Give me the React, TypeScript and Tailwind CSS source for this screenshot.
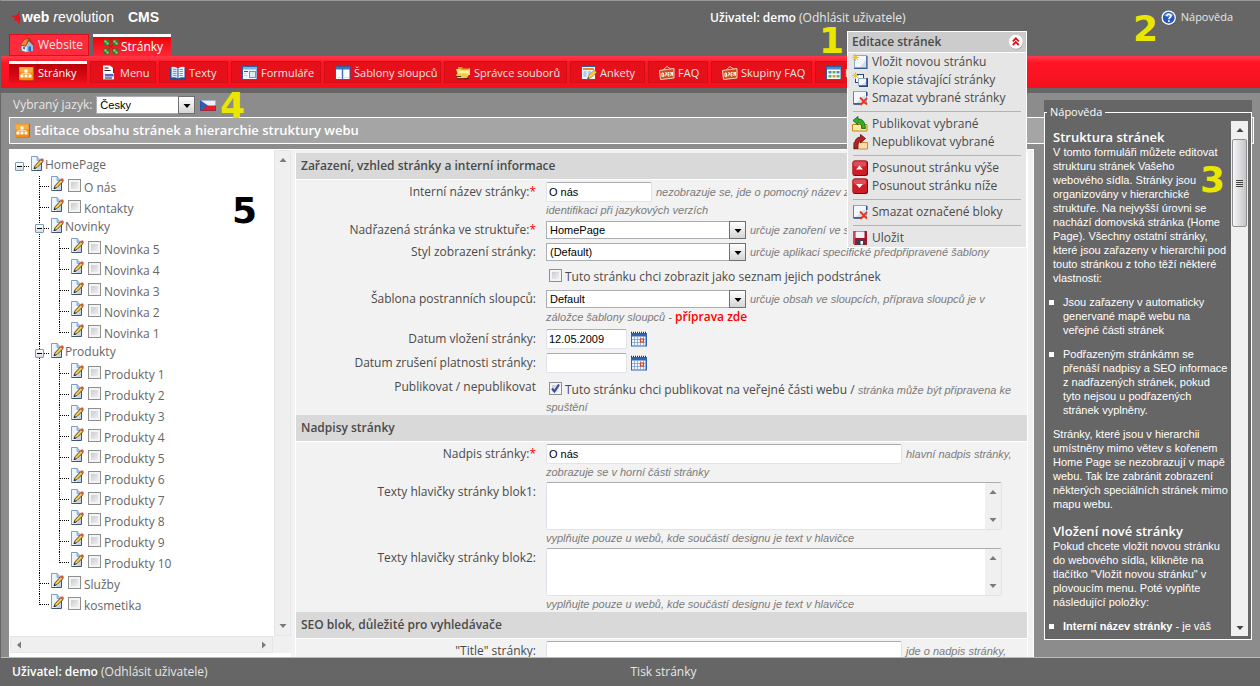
import React, { useState } from 'react';

type IconProps = { className?: string };

type TreeNode = {
    label: string;
    children?: TreeNode[];
};

const Svg = ({
    className = '',
    children,
}: {
    className?: string;
    children: React.ReactNode;
}) => (
    <svg
        viewBox="0 0 16 16"
        aria-hidden="true"
        className={`size-4 shrink-0 ${className}`}
    >
        {children}
    </svg>
);

/* ---------- icons ---------- */

const StarLogo = () => (
    <svg viewBox="0 0 10 14" aria-hidden="true" className="h-[14px] w-[10px] shrink-0">
        <path
            d="M0 5 5.600 4.200 8.800.200 8.300 5 9.400 7 8.600 10 7.600 14 6.600 9.800 3 9.600 4.200 7Z"
            fill="#e8111c"
        />
    </svg>
);

const HouseIcon = () => (
    <Svg>
        <path d="M2.500 8v5.500l5 1.500 6.500-1.500V7.500L10 4Z" fill="#e9f2fc" />
        <path d="M7.500 15 14 13.500V8l-4-3.500L7.500 9Z" fill="#8fc0f0" />
        <path d="M9.500 9.500h2.500v4.800l-2.500.5Z" fill="#2a62b8" />
        <path d="M4 10h2v2.500l-2-.4Z" fill="#3b78c9" />
        <path d="M.8 8.400 5 2 10.500.800 15.400 7.800 14 8.600 10 4.200 6.800 9.800Z" fill="#a83e16" />
        <path d="M2 7.800 5.500 2.800 9.500 2 6.500 8.600Z" fill="#e8863f" />
        <path d="M0 12.500 3 13.500" stroke="#4e9a3a" strokeWidth="2" fill="none" />
    </Svg>
);

const ClusterIcon = () => (
    <Svg>
        {[
            [0, 0],
            [9, 0],
            [0, 9],
            [9, 9],
        ].map(([x, y]) => (
            <g key={`${x}-${y}`}>
                <rect x={x + 0.5} y={y + 0.5} width="6" height="6" rx="1" fill="#2f7a2b" />
                <path
                    d={`M${x + 1.5} ${y + 1.5}h2v2h-2ZM${x + 3.5} ${y + 3.5}h2v2h-2Z`}
                    fill="#9bd692"
                />
            </g>
        ))}
        <path d="M6 6 10 10M10 6 6 10" stroke="#8f1218" strokeDasharray="1 1" />
    </Svg>
);

const SitemapIcon = () => (
    <Svg>
        <rect x="1" y="1" width="14" height="13.500" rx="1" fill="#b5690a" />
        <rect x="0" y="1" width="14" height="13" rx="1" fill="#f28c10" />
        <rect x=".500" y="1.500" width="13" height="5" fill="#f9ae45" />
        <path
            d="M5.500 3.500h3V6.500h-3ZM1.500 8.500H4.500v3H1.500ZM5.500 8.500h3v3h-3ZM9.500 8.500h3v3h-3Z"
            fill="#fff"
        />
        <path d="M3 8V7.500h8V8M7 6v2" stroke="#fff" strokeWidth=".600" fill="none" />
    </Svg>
);

const MenuIcon = () => (
    <Svg>
        <path d="M3 3h10v12H3Z" fill="#7e1016" />
        <path d="M2 .500h7l3 2.500v5H2Z" fill="#fff" />
        <path d="M2 8h11v6.500H2Z" fill="#eef1fb" />
        <path d="M3.500 3h4M3.500 5.500h6" stroke="#222" />
        <path d="M4 9h8.500v2.500H4Z" fill="#5566c8" />
        <path d="M4 13h7" stroke="#222" />
    </Svg>
);

const BookIcon = () => (
    <Svg>
        <path d="M0 3h16v11.500H9.500L8 15.500 6.500 14.500H0Z" fill="#1d4f8e" />
        <path d="M1.500 2Q5.500 1 8 3.500V13.500Q5 11.500 1.500 12.500Z" fill="#dcebf8" />
        <path d="M14.500 2Q10.500 1 8 3.500V13.500Q11 11.500 14.500 12.500Z" fill="#f4faff" />
        <path
            d="M3 4.500h3.500M3 6.500h3.500M3 8.500h3.500M3 10.500h3.500M9.500 4.500H13M9.500 6.500H13M9.500 8.500H13M9.500 10.500H13"
            stroke="#6d9cc8"
        />
        <path d="M8 3.500v10" stroke="#1d4f8e" />
    </Svg>
);

const FormIcon = () => (
    <Svg>
        <rect x=".500" y="1.500" width="14.500" height="13" fill="#f3f8ff" stroke="#2c5f9e" />
        <rect x="1" y="2" width="14" height="2.500" fill="#7fb0ea" />
        <path d="M2 6.500h4" stroke="#2c5f9e" />
        <path d="M2 8.500h2.500M2 10.500h3.500" stroke="#c3d3e8" />
        <rect x="7.500" y="6.500" width="6" height="6" fill="#dfe9f6" stroke="#6f93c4" />
    </Svg>
);

const ColumnsIcon = () => (
    <Svg>
        <rect x=".500" y="1.500" width="14.500" height="13" fill="#fff" stroke="#2c5f9e" />
        <rect x="1" y="2" width="14" height="2.500" fill="#3f74bc" />
        <path d="M7.500 4v10.500" stroke="#3f74bc" strokeWidth="1.500" />
        <path d="M2 12.500h5M9 12.500h5" stroke="#d5e2f2" />
    </Svg>
);

const FoldersIcon = () => (
    <Svg>
        <path d="M3 2h4l1 1.500h6.500V8H3Z" fill="#d9a520" />
        <path d="M1 4h4l1 1h7l2-2v7H3Z" fill="#f7dc6b" />
        <path d="M3.500 6H15l-2 5.500H2Z" fill="#fbeb9f" />
        <path d="M1 9.500 4 8.500h9L12 13H2.500Z" fill="#f0c948" />
        <path d="M1 11.500h5M2 14h11" stroke="#4b3d14" />
        <path d="M9 13.500h5" stroke="#7b1a10" />
    </Svg>
);

const PollIcon = () => (
    <Svg>
        <rect x=".500" y="1.500" width="14" height="13" fill="#eaf2fc" stroke="#2c5f9e" />
        <rect x="2" y="3" width="11" height="2" fill="#e88b2e" />
        <path
            d="M2.500 7h3M2.500 9h3M2.500 11h3M7 7h3M7 9h2"
            stroke="#7fa4d4"
        />
        <path d="M6.500 14 8 10 13.500 5 15.500 7.500 10 12.500Z" fill="#f5d24a" stroke="#a8761a" strokeWidth=".700" />
        <path d="M6.500 14 7.200 12 8.400 13.300Z" fill="#333" />
    </Svg>
);

const OpenSignIcon = () => (
    <Svg>
        <path d="M4 5 8 1.500 12.500 4.500" fill="none" stroke="#f0c9a8" />
        <path d="M.500 5.500 15 3.500V13L1.500 14.500Z" fill="#c9521b" stroke="#f5d5be" />
        <path
            d="M3 8h1.500v3.500H3ZM6 7.800h1.600v2H6v1.500M9 11V7.500h1.500M9 9.300h1.500M9 11h1.500M12 11V7l1.500 3.500V7"
            fill="none"
            stroke="#fff"
            strokeWidth=".900"
        />
    </Svg>
);

const TableIcon = () => (
    <Svg>
        <rect x=".500" y="1.500" width="14.500" height="13" fill="#fff" stroke="#2c5f9e" />
        <rect x="1" y="2" width="14" height="2.500" fill="#4f86cc" />
        <path d="M2.500 6h3v2.500h-3ZM10.500 6h3v2.500h-3Z" fill="#4f86cc" />
        <path d="M6.500 6h3v2.500h-3Z" fill="#5bb548" />
        <path d="M2.500 10h3v2.500h-3ZM10.500 10h3v2.500h-3Z" fill="#5bb548" />
        <path d="M6.500 10h3v2.500h-3Z" fill="#f08f2c" />
    </Svg>
);

const HelpIcon = () => (
    <Svg>
        <circle cx="8.300" cy="8.500" r="7.200" fill="#444" opacity=".6" />
        <circle cx="7.700" cy="7.700" r="7.200" fill="#fff" />
        <circle cx="7.700" cy="7.700" r="5.900" fill="#2458bd" />
        <path d="M3 5.500a5.300 5.300 0 0 1 9.400 0Q8 8 3 5.500Z" fill="#6d9ce8" />
        <path
            d="M5.700 6.200Q5.900 4.300 7.900 4.300T10 6.100Q10 7 8.800 7.700 7.900 8.200 7.900 9.300M7.900 10.300v1.600"
            fill="none"
            stroke="#fff"
            strokeWidth="1.600"
        />
    </Svg>
);

const FlagIcon = () => (
    <svg viewBox="0 0 16 11" aria-hidden="true" className="w-4 h-[11px]">
        <rect width="16" height="11" fill="#eef1f6" />
        <rect y="5.500" width="16" height="5.500" fill="#e01f26" />
        <path d="M0 0 8 5.500 0 11Z" fill="#2f5fb4" />
        <rect x=".500" y=".500" width="15" height="10" fill="none" stroke="#24407a" strokeOpacity=".35" />
    </svg>
);

const EditIcon = () => (
    <Svg>
        <path d="M.500.500h5.500L10.500 5v9.500h-10Z" fill="#eef4fb" />
        <path d="M5 14h5.500V8Z" fill="#c2d3e6" />
        <path d="M.500 14.500V.500H6.500" stroke="#7f9dc0" fill="none" />
        <path d="M6 .500V4.500h4Z" fill="#a9c4e2" stroke="#7f9dc0" strokeWidth=".700" />
        <path d="M.500 14.500h10V7" stroke="#3f5573" fill="none" />
        <path d="M3 12.800 4 9.800 9.800 3.500 12 5.600 6 11.600Z" fill="#f7cd46" stroke="#3a3120" strokeWidth=".900" />
        <path d="M9.300 3.800 10.800 2.300Q12.800 2.300 12.900 4.400L11.500 5.900Z" fill="#d9573f" />
        <path d="M2.800 13 3.500 10.900 5 12.200Z" fill="#222" />
    </Svg>
);

const CalendarIcon = () => (
    <Svg>
        <rect x="0" y="2" width="16" height="13.500" fill="#2f63b5" />
        <rect x="1" y="5.500" width="13.500" height="9" fill="#f2f7ff" />
        <path
            d="M1 8.500h13.500M1 11.500h13.500M3.500 5.500v9M6.500 5.500v9M9.500 5.500v9M12.500 5.500v9"
            stroke="#7ea2d8"
            strokeWidth=".800"
        />
        <path d="M0 1.500h16" stroke="#333" strokeWidth="1.500" strokeDasharray="1 1" />
        <rect x="9.500" y="8" width="3" height="3" fill="#fff" stroke="#e2401c" strokeWidth="1.200" />
    </Svg>
);

const Spark = () => (
    <path
        d="M3.500 0v7M0 3.500h7M1 1l5 5M6 1 1 6"
        stroke="#e9c63a"
        strokeWidth="1"
        fill="none"
    />
);

const NewPageIcon = () => (
    <Svg>
        <rect x="2.500" y="1.500" width="12" height="12" fill="#f4f7fc" stroke="#8fa8cc" />
        <path d="M2 14.500h13V2" stroke="#3a5c94" strokeWidth="1.200" fill="none" />
        <path d="M8 13h6V6Z" fill="#d3ddec" />
        <Spark />
    </Svg>
);

const CopyPageIcon = () => (
    <Svg>
        <rect x="3.500" y="2.500" width="8" height="8" fill="#f4f7fc" stroke="#27477e" />
        <rect x="6.500" y="6.500" width="8" height="7" fill="#f4f7fc" stroke="#8fa8cc" />
        <path d="M7 14.200h8.200V6" stroke="#27477e" strokeWidth="1.600" fill="none" />
        <path d="M10 13h4V9Z" fill="#d3ddec" />
        <Spark />
    </Svg>
);

const DeletePageIcon = () => (
    <Svg>
        <rect x="1.500" y="1.500" width="13" height="12" fill="#f4f7fc" stroke="#8fa8cc" />
        <path d="M1.500 13.500V1.500" stroke="#5d83b8" />
        <path d="M1.500 14h8M14.800 2v4" stroke="#27477e" strokeWidth="1.400" />
        <path d="M4 13 13 5v8Z" fill="#d3ddec" />
        <path d="M8 7.500 15 14.500M15 8 8.500 15" stroke="#e8391c" strokeWidth="1.900" />
    </Svg>
);

const PublishIcon = () => (
    <Svg>
        <path d="M.500 8.500H15v6.500H.500Z" fill="#fbe9a0" stroke="#b98a1e" />
        <path
            d="M1 4.500 6 .500V3Q13 2.500 13.500 12.500H9.500Q10 7 6 6.500V9Z"
            fill="#2fae2c"
            stroke="#12600f"
            strokeWidth=".800"
        />
    </Svg>
);

const UnpublishIcon = () => (
    <Svg>
        <path d="M1.500 8.500h14V15h-14Z" fill="#fbdca6" stroke="#c58a3a" />
        <path
            d="M13.500 4.500 8.500.500V3Q2 3 2 14.500H6Q5.500 7 8.500 6.500V9Z"
            fill="#c01c26"
            stroke="#5d0b10"
            strokeWidth=".800"
        />
    </Svg>
);

const MoveIcon = ({ down }: { down?: boolean }) => (
    <Svg>
        <rect x=".500" y=".500" width="15.500" height="15.500" rx="2.500" fill="#6d0d12" />
        <rect x=".500" y=".500" width="14.500" height="14.500" rx="2.500" fill="#cf1c26" />
        <rect x="1.500" y="1.500" width="12.500" height="5" rx="1.500" fill="#dd4d55" />
        <path d={down ? 'M4 6h7L7.500 10Z' : 'M4 9.500h7L7.500 5.500Z'} fill="#fff" />
    </Svg>
);

const SaveIcon = () => (
    <Svg>
        <path d="M1 1h14v14H2.500L1 13.500Z" fill="#a81428" />
        <path d="M1 1h2v13H1Z" fill="#d2485a" />
        <path d="M3.500 1.500h9V8h-9Z" fill="#f1f3f8" />
        <path d="M4.500 10h8v5h-8Z" fill="#3b3f4a" />
        <path d="M8.500 11h2.500v3.500H8.500Z" fill="#fff" />
    </Svg>
);

const CollapseIcon = () => (
    <Svg>
        <circle cx="8.300" cy="8.800" r="7" fill="#999" opacity=".6" />
        <circle cx="7.800" cy="7.800" r="7" fill="#fff" />
        <path
            d="M4.800 7.300 7.800 4.300 10.800 7.300M4.800 11 7.800 8 10.800 11"
            fill="none"
            stroke="#e00f1a"
            strokeWidth="1.800"
        />
    </Svg>
);

const Arrow = ({ dir, className = '' }: { dir: 'up' | 'down' | 'left' | 'right' } & IconProps) => {
    const paths = {
        up: 'M.5 6 4 2 7.500 6Z',
        down: 'M.5 2 4 6 7.500 2Z',
        left: 'M6 .5 2 4 6 7.500Z',
        right: 'M2 .5 6 4 2 7.500Z',
    };
    return (
        <svg viewBox="0 0 8 8" aria-hidden="true" className={`size-2 ${className}`}>
            <path d={paths[dir]} fill="currentColor" />
        </svg>
    );
};

/* ---------- data ---------- */

const leaves = (name: string, numbers: number[]): TreeNode[] =>
    numbers.map((n) => ({ label: `${name} ${n}` }));

const tree: TreeNode = {
    label: 'HomePage',
    children: [
        { label: 'O nás' },
        { label: 'Kontakty' },
        { label: 'Novinky', children: leaves('Novinka', [5, 4, 3, 2, 1]) },
        {
            label: 'Produkty',
            children: leaves('Produkty', [1, 2, 3, 4, 5, 6, 7, 8, 9, 10]),
        },
        { label: 'Služby' },
        { label: 'kosmetika' },
    ],
};

const subNav = [
    { label: 'Stránky', icon: <SitemapIcon />, width: 'w-[78px]', active: true },
    { label: 'Menu', icon: <MenuIcon />, width: 'w-[66px]' },
    { label: 'Texty', icon: <BookIcon />, width: 'w-[69px]' },
    { label: 'Formuláře', icon: <FormIcon />, width: 'w-[90px]' },
    { label: 'Šablony sloupců', icon: <ColumnsIcon />, width: 'w-[117px]' },
    { label: 'Správce souborů', icon: <FoldersIcon />, width: 'w-[123px]' },
    { label: 'Ankety', icon: <PollIcon />, width: 'w-[75px]' },
    { label: 'FAQ', icon: <OpenSignIcon />, width: 'w-[60px]' },
    { label: 'Skupiny FAQ', icon: <OpenSignIcon />, width: 'w-[101px]' },
    { label: 'Reference', icon: <TableIcon />, width: 'w-[90px]' },
];

const menuGroups = [
    [
        { label: 'Vložit novou stránku', icon: <NewPageIcon /> },
        { label: 'Kopie stávající stránky', icon: <CopyPageIcon /> },
        { label: 'Smazat vybrané stránky', icon: <DeletePageIcon /> },
    ],
    [
        { label: 'Publikovat vybrané', icon: <PublishIcon /> },
        { label: 'Nepublikovat vybrané', icon: <UnpublishIcon /> },
    ],
    [
        { label: 'Posunout stránku výše', icon: <MoveIcon /> },
        { label: 'Posunout stránku níže', icon: <MoveIcon down /> },
    ],
    [{ label: 'Smazat označené bloky', icon: <DeletePageIcon /> }],
    [{ label: 'Uložit', icon: <SaveIcon /> }],
];

/* ---------- small controls ---------- */

const Check = ({
    id,
    label,
    defaultChecked,
}: {
    id?: string;
    label?: string;
    defaultChecked?: boolean;
}) => (
    <span className="relative inline-flex size-[13px] shrink-0">
        <input
            id={id}
            type="checkbox"
            aria-label={label}
            defaultChecked={defaultChecked}
            className="peer size-[13px] appearance-none border border-[#8e8f8f] bg-linear-to-br from-[#c0c4ca] to-[#f8f8f8] shadow-[inset_0_0_0_2px_#f4f4f4]"
        />
        <svg
            viewBox="0 0 13 13"
            aria-hidden="true"
            className="absolute inset-0 hidden size-[13px] pointer-events-none peer-checked:block"
        >
            <path d="M3 6.500 5.500 9.500 10 2.500" fill="none" stroke="#3b4f94" strokeWidth="2.200" />
        </svg>
    </span>
);

const Select = ({
    id,
    value,
    label,
    className,
}: {
    id: string;
    value: string;
    label?: string;
    className: string;
}) => (
    <span className={`relative inline-flex h-[18px] shrink-0 ${className}`}>
        <select
            id={id}
            aria-label={label}
            className="size-full appearance-none border border-[#abadb3] bg-white pl-[3px] font-[Liberation_Sans,Arial,sans-serif] text-[11px] leading-4 text-black outline-none"
        >
            <option>{value}</option>
        </select>
        <span className="absolute inset-y-0 right-0 flex w-[17px] items-center justify-center border border-[#707070] bg-linear-to-b from-white to-[#d5d5d5] pt-0.5 text-black pointer-events-none">
            <Arrow dir="down" />
        </span>
    </span>
);

const TextInput = ({
    id,
    value,
    className,
}: {
    id: string;
    value?: string;
    className: string;
}) => (
    <input
        id={id}
        type="text"
        defaultValue={value}
        className={`h-5 shrink-0 rounded-[2px] border border-[#e2e3ea] border-t-[#abadb3] bg-white px-[2px] font-[Liberation_Sans,Arial,sans-serif] text-[11px] text-black outline-none ${className}`}
    />
);

const Hint = ({ children }: { children: React.ReactNode }) => (
    <em className="font-[Liberation_Sans,Arial,sans-serif] text-[11px] leading-4 text-[#7b7b7b]">
        {children}
    </em>
);

const Row = ({
    label,
    htmlFor,
    required,
    className = '',
    children,
}: {
    label?: string;
    htmlFor?: string;
    required?: boolean;
    className?: string;
    children: React.ReactNode;
}) => (
    <div className={`grid grid-cols-[240px_1fr] gap-x-[10px] pt-0.5 ${className}`}>
        <div className="text-right leading-5">
            {label && (
                <label htmlFor={htmlFor}>
                    {label}
                    {required && <span className="text-[#f00]">*</span>}
                </label>
            )}
        </div>
        <div className="flex flex-col">{children}</div>
    </div>
);

const Line = ({ children }: { children: React.ReactNode }) => (
    <div className="flex h-5 items-center gap-1 whitespace-nowrap">{children}</div>
);

/* a tick box with its text sitting slightly below the box */
const CheckLine = ({ children }: { children: React.ReactNode }) => (
    <div className="flex h-[22px] items-end gap-[3px] whitespace-nowrap pl-[3px] leading-[18px]">
        {children}
    </div>
);

const Section = ({ title, children }: { title: string; children: React.ReactNode }) => (
    <section>
        <h2 className="h-[27px] border-b border-white bg-[#d9d9d9] pl-[5px] font-semibold leading-[26px]">
            {title}
        </h2>
        {children}
    </section>
);

const BlockArea = ({ id }: { id: string }) => (
    <div className="flex h-12 w-[456px] rounded-[2px] border border-[#e2e3ea] border-t-[#abadb3] bg-white">
        <textarea id={id} className="flex-1 resize-none bg-transparent outline-none" />
        <span className="flex w-4 flex-col items-center justify-between bg-[#f0f0f0] py-[5px] text-[#7a7a7a]">
            <Arrow dir="up" />
            <Arrow dir="down" />
        </span>
    </div>
);

/* ---------- page parts ---------- */

const TreeItem = ({ node, last, root }: { node: TreeNode; last?: boolean; root?: boolean }) => {
    const [open, setOpen] = useState(true);

    return (
        <li className="flex">
            <div
                className={`w-3 shrink-0 border-l border-dotted ${root ? 'border-transparent' : 'border-black'} ${last ? 'h-[11px]' : ''}`}
            >
                <div className="h-[11px] w-[9px] border-b border-dotted border-black" />
            </div>
            <div className="relative">
                {node.children ? (
                    <>
                        <button
                            type="button"
                            aria-label={`Sbalit ${node.label}`}
                            onClick={() => setOpen(!open)}
                            className="absolute -left-4 top-1.5 flex size-[9px] items-center justify-center rounded-[1px] border border-[#7898b5] bg-linear-to-b from-white to-[#d8dde5]"
                        >
                            <span className="h-px w-[5px] bg-black" />
                        </button>
                        <div className="flex h-5">
                            <EditIcon />
                            <span className="-ml-0.5 leading-[18px]">{node.label}</span>
                        </div>
                        {open && (
                            <ul className="pl-2">
                                {node.children.map((child, i) => (
                                    <TreeItem
                                        key={child.label}
                                        node={child}
                                        last={i === node.children!.length - 1}
                                    />
                                ))}
                            </ul>
                        )}
                    </>
                ) : (
                    <label className="flex h-[21px]">
                        <EditIcon />
                        <span className="flex pl-px pt-[3px] pr-[3px]">
                            <Check />
                        </span>
                        <span className="pt-[3px] leading-[18px]">{node.label}</span>
                    </label>
                )}
            </div>
        </li>
    );
};

const TreePanel = () => (
    <div className="flex w-[282px] shrink-0 flex-col bg-white">
        <div className="flex min-h-0 flex-1">
            <ul className="flex-1 overflow-hidden pl-[10px] pt-1.5 text-[12px] text-[#666]">
                <TreeItem node={tree} root last />
            </ul>
            <div className="flex w-[17px] flex-col items-center justify-between border border-[#e6e6e6] bg-[#efefef] py-[5px] text-[#7a7a7a]">
                <Arrow dir="up" />
                <Arrow dir="down" />
            </div>
        </div>
        <div className="mb-1 flex h-[17px]">
            <div className="ml-px flex flex-1 items-center justify-between border border-[#e6e6e6] bg-[#efefef] px-1 text-[#7a7a7a]">
                <Arrow dir="left" />
                <Arrow dir="right" />
            </div>
            <div className="w-[18px] bg-[#f0f0f0]" />
        </div>
    </div>
);

const PageForm = () => (
    <form className="min-w-0 flex-1 overflow-hidden border-x border-white text-[12px] text-[#4a4a4a]">
        <Section title="Zařazení, vzhled stránky a interní informace">
            <Row label="Interní název stránky:" htmlFor="name" required>
                <Line>
                    <TextInput id="name" value="O nás" className="w-[106px]" />
                    <Hint>nezobrazuje se, jde o pomocný název zobrazený pro lepší</Hint>
                </Line>
                <Hint>identifikaci při jazykových verzích</Hint>
            </Row>
            <Row label="Nadřazená stránka ve struktuře:" htmlFor="parent" required>
                <Line>
                    <Select id="parent" value="HomePage" className="w-[200px]" />
                    <Hint>určuje zanoření ve struktuře webu</Hint>
                </Line>
            </Row>
            <Row label="Styl zobrazení stránky:" htmlFor="style">
                <Line>
                    <Select id="style" value="(Default)" className="w-[200px]" />
                    <Hint>určuje aplikaci specifické předpřipravené šablony</Hint>
                </Line>
            </Row>
            <Row className="pb-px">
                <CheckLine>
                    <span className="flex pb-1">
                        <Check id="aslist" />
                    </span>
                    <label htmlFor="aslist">
                        Tuto stránku chci zobrazit jako seznam jejich podstránek
                    </label>
                </CheckLine>
            </Row>
            <Row label="Šablona postranních sloupců:" htmlFor="columns" className="pb-0.5">
                <Line>
                    <Select id="columns" value="Default" className="w-[200px]" />
                    <Hint>určuje obsah ve sloupcích, příprava sloupců je v</Hint>
                </Line>
                <Hint>
                    záložce šablony sloupců -{' '}
                    <a
                        href="#sablony"
                        className="font-['Open_Sans',sans-serif] text-[12px] font-semibold not-italic text-[#f00]"
                    >
                        příprava zde
                    </a>
                </Hint>
            </Row>
            <Row label="Datum vložení stránky:" htmlFor="from" className="pb-0.5">
                <Line>
                    <TextInput id="from" value="12.05.2009" className="w-[81px]" />
                    <button type="button" aria-label="Vybrat datum vložení">
                        <CalendarIcon />
                    </button>
                </Line>
            </Row>
            <Row label="Datum zrušení platnosti stránky:" htmlFor="to" className="pb-0.5">
                <Line>
                    <TextInput id="to" className="w-[81px]" />
                    <button type="button" aria-label="Vybrat datum zrušení">
                        <CalendarIcon />
                    </button>
                </Line>
            </Row>
            <Row label="Publikovat / nepublikovat" htmlFor="publish">
                <CheckLine>
                    <span className="flex pb-1">
                        <Check id="publish" defaultChecked />
                    </span>
                    <span>
                        Tuto stránku chci publikovat na veřejné části webu /{' '}
                        <Hint>stránka může být připravena ke</Hint>
                    </span>
                </CheckLine>
                <Hint>spuštění</Hint>
            </Row>
        </Section>
        <Section title="Nadpisy stránky">
            <Row label="Nadpis stránky:" htmlFor="heading" required>
                <Line>
                    <TextInput id="heading" value="O nás" className="w-[356px]" />
                    <Hint>hlavní nadpis stránky,</Hint>
                </Line>
                <Hint>zobrazuje se v horní části stránky</Hint>
            </Row>
            <Row label="Texty hlavičky stránky blok1:" htmlFor="block1">
                <BlockArea id="block1" />
                <Hint>vyplňujte pouze u webů, kde součástí designu je text v hlavičce</Hint>
            </Row>
            <Row label="Texty hlavičky stránky blok2:" htmlFor="block2">
                <BlockArea id="block2" />
                <Hint>vyplňujte pouze u webů, kde součástí designu je text v hlavičce</Hint>
            </Row>
        </Section>
        <Section title="SEO blok, důležité pro vyhledávače">
            <Row label={'"Title" stránky:'} htmlFor="title">
                <Line>
                    <TextInput id="title" className="w-[356px]" />
                    <Hint>jde o nadpis stránky,</Hint>
                </Line>
            </Row>
        </Section>
    </form>
);

const FloatingMenu = () => (
    <div className="absolute right-[233px] top-[30px] w-[180px] border border-white bg-[#e6e6e6] text-[12px] text-[#4a4a4a]">
        <div className="flex h-[21px] items-center justify-between border-b border-white bg-[#ccc] pl-1 pr-0.5">
            <h2 className="font-semibold">Editace stránek</h2>
            <button type="button" aria-label="Sbalit menu">
                <CollapseIcon />
            </button>
        </div>
        {menuGroups.map((group, i) => (
            <div key={group[0].label}>
                {i > 0 && (
                    <div className="flex h-2 items-center px-[5px]">
                        <div className="h-px flex-1 bg-[#b3b3b3]" />
                    </div>
                )}
                {group.map((item) => (
                    <button
                        key={item.label}
                        type="button"
                        className="flex h-[18px] w-full items-center gap-1 whitespace-nowrap pl-1"
                    >
                        {item.icon}
                        {item.label}
                    </button>
                ))}
            </div>
        ))}
    </div>
);

const HelpPanel = () => (
    <aside className="absolute bottom-[46px] right-2 top-[99px] flex w-[208px] bg-[#666] pt-[3px] text-white">
        <fieldset className="flex min-h-0 min-w-0 flex-1 flex-col border border-white pr-[3px] pb-[3px]">
            <legend className="ml-0.5 px-[3px] text-[11px] leading-[18px]">Nápověda</legend>
            <div className="flex min-h-0 flex-1">
                <div className="h-full flex-1 overflow-hidden pl-2 pr-0.5 pt-2 font-[Liberation_Sans,Arial,sans-serif] text-[11px] leading-[14px]">
                    <h3 className="font-['Open_Sans',sans-serif] text-[13px] font-semibold leading-4">
                        Struktura stránek
                    </h3>
                    <p>
                        V tomto formuláři můžete editovat strukturu stránek Vašeho
                        <br />
                        webového sídla. Stránky jsou organizovány v hierarchické struktuře. Na
                        nejvyšší úrovni se nachází domovská stránka (Home Page). Všechny
                        ostatní stránky, které jsou zařazeny v hierarchii pod touto stránkou z
                        toho těží některé vlastnosti:
                    </p>
                    <ul className="-ml-1 mt-[10px] flex flex-col gap-[10px]">
                        <li className="flex gap-[9px] pr-2">
                            <span className="mt-[5px] size-[5px] shrink-0 bg-white" />
                            Jsou zařazeny v automaticky genervané mapě webu na veřejné části
                            stránek
                        </li>
                        <li className="flex gap-[9px]">
                            <span className="mt-[5px] size-[5px] shrink-0 bg-white" />
                            Podřazeným stránkámn se přenáší nadpisy a SEO informace z
                            nadřazených stránek, pokud tyto nejsou u podřazených stránek
                            vyplněny.
                        </li>
                    </ul>
                    <p className="mt-[10px]">
                        Stránky, které jsou v hierarchii umístněny mimo větev s kořenem Home
                        Page se nezobrazují v mapě webu. Tak lze zabránit zobrazení některých
                        speciálních stránek mimo mapu webu.
                    </p>
                    <h3 className="mt-3 font-['Open_Sans',sans-serif] text-[13px] font-semibold leading-4">
                        Vložení nové stránky
                    </h3>
                    <p>
                        Pokud chcete vložit novou stránku do webového sídla, klikněte na
                        tlačítko "Vložit novou stránku" v plovoucím menu. Poté vyplňte
                        následující položky:
                    </p>
                    <ul className="-ml-1 mt-[10px]">
                        <li className="flex gap-[9px]">
                            <span className="mt-[5px] size-[5px] shrink-0 bg-white" />
                            <span>
                                <b>Interní název stránky</b> - je váš
                            </span>
                        </li>
                    </ul>
                </div>
                <div className="flex w-[17px] shrink-0 flex-col items-center bg-[#f0f0f0] pb-1 text-[#444]">
                    <Arrow dir="up" className="my-[5px]" />
                    <div className="flex h-[88px] w-[15px] flex-col items-center justify-center gap-px rounded-[2px] border border-[#8f8f8f] bg-linear-to-r from-[#f7f7f7] to-[#c4c4c8]">
                        <span className="h-px w-[7px] bg-[#444]" />
                        <span className="h-px w-[7px] bg-[#444]" />
                        <span className="h-px w-[7px] bg-[#444]" />
                        <span className="h-px w-[7px] bg-[#444]" />
                    </div>
                    <Arrow dir="down" className="mt-auto" />
                </div>
            </div>
        </fieldset>
    </aside>
);

const Marker = ({ className, children }: { className: string; children: string }) => (
    <span
        className={`absolute font-['DejaVu_Sans',sans-serif] text-[36px] font-bold leading-[36px] pointer-events-none ${className}`}
    >
        {children}
    </span>
);

const UserInfo = () => (
    <div>
        <span className="font-semibold text-white">Uživatel: demo</span>{' '}
        <a href="#odhlasit">(Odhlásit uživatele)</a>
    </div>
);

const App = () => (
    <div className="relative flex h-screen min-h-[400px] flex-col overflow-hidden border-l border-t border-t-[#999] border-l-[#666] bg-[#666] font-['Open_Sans',sans-serif] text-[12px] text-[#e6e6e6]">
        <header className="flex h-[33px] shrink-0 items-center justify-between pl-[10px]">
            <div className="flex items-center font-[Liberation_Sans,Arial,sans-serif] text-[14px] text-white">
                <StarLogo />
                <b className="ml-px">web</b>
                <span className="ml-1">
                    <i>r</i>evolution
                </span>
                <b className="ml-[14px]">CMS</b>
            </div>
            <div className="flex w-[550px] items-center justify-between pr-[27px]">
                <UserInfo />
                <a href="#napoveda" className="flex items-center gap-1 text-[11px]">
                    <HelpIcon />
                    Nápověda
                </a>
            </div>
        </header>

        <nav className="flex h-[22px] shrink-0 items-stretch gap-1 pl-2">
            <a
                href="#website"
                className="flex w-20 items-center gap-[3px] border border-[#d9101c] bg-[#ff2a3b] pl-[9px]"
            >
                <HouseIcon />
                Website
            </a>
            <a
                href="#stranky"
                className="flex w-[78px] items-center gap-0.5 border-t-[3px] border-white bg-linear-to-b from-[#ee0000] to-[#ff2536] pl-[10px] text-white"
            >
                <ClusterIcon />
                Stránky
            </a>
        </nav>

        <nav className="h-8 shrink-0 bg-linear-to-b from-[#ff3a4b] via-[#ff1525] via-20% to-[#f5101c] pt-[5px] pl-2">
            <div className="flex gap-[3px]">
                {subNav.map((item) => (
                    <a
                        key={item.label}
                        href={`#${item.label}`}
                        className={`flex h-[22px] shrink-0 items-center gap-[3px] whitespace-nowrap pl-[10px] text-[11px] ${item.width} ${
                            item.active
                                ? 'border-t-[3px] border-white bg-linear-to-b from-[#b80008] to-[#e8101b] text-white'
                                : 'border border-[#d00f18] bg-[#e51019] pt-0.5'
                        }`}
                    >
                        {item.icon}
                        {item.label}
                    </a>
                ))}
            </div>
        </nav>

        <main className="mt-[5px] flex min-h-0 flex-1 flex-col bg-[#8c8c8c] pl-2">
            <div className="flex h-6 shrink-0 items-center pl-1">
                <label htmlFor="lang" className="mr-1">
                    Vybraný jazyk:
                </label>
                <Select id="lang" value="Česky" className="w-[99px]" />
                <span className="ml-[5px]">
                    <FlagIcon />
                </span>
            </div>
            <div className="mr-[6px] flex h-[27px] shrink-0 items-center gap-[3px] border border-white bg-[#a5a5a5] pl-[5px]">
                <SitemapIcon />
                <h1 className="text-[13px] font-semibold text-white">
                    Editace obsahu stránek a hierarchie struktury webu
                </h1>
            </div>
            <div className="mr-[226px] mt-[5px] flex min-h-0 flex-1 border-r border-t border-white bg-[#f2f2f2]">
                <TreePanel />
                <div className="flex min-w-0 flex-1 pl-1 pr-[5px] pt-[3px]">
                    <PageForm />
                </div>
            </div>
        </main>

        <footer className="flex h-[29px] shrink-0 items-center border-t border-[#bbb]">
            <div className="w-1/2 pl-[11px]">
                <UserInfo />
            </div>
            <a href="#tisk">Tisk stránky</a>
        </footer>

        <HelpPanel />
        <FloatingMenu />

        <Marker className="left-[818px] top-[22px] text-[#ebe600]">1</Marker>
        <Marker className="right-[102px] top-[10px] text-[#ebe600]">2</Marker>
        <Marker className="right-[35px] top-[161px] text-[#ebe600]">3</Marker>
        <Marker className="left-[219px] top-[87px] text-[#ebe600]">4</Marker>
        <Marker className="left-[231px] top-[192px] text-black">5</Marker>
    </div>
);

export default App;
